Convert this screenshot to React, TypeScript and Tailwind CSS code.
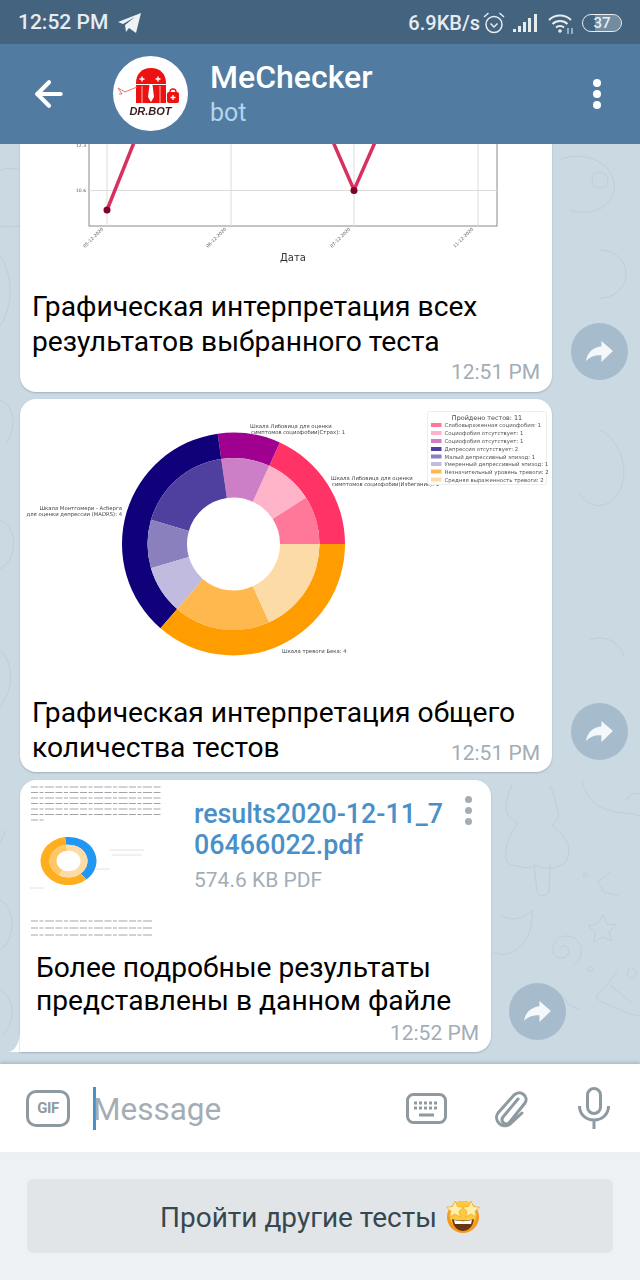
import React from 'react';
import { ArrowLeft } from 'lucide-react';

const FONT = "font-['Roboto','Noto_Sans',sans-serif]";

// matplotlib style wedge, angles in degrees counterclockwise from east
function wedge(cx: number, cy: number, r0: number, r1: number, a0: number, a1: number) {
  const p = (r: number, a: number) => {
    const t = (a * Math.PI) / 180;
    return `${(cx + r * Math.cos(t)).toFixed(2)} ${(cy - r * Math.sin(t)).toFixed(2)}`;
  };
  const large = a1 - a0 > 180 ? 1 : 0;
  return `M${p(r1, a0)} A${r1} ${r1} 0 ${large} 0 ${p(r1, a1)} L${p(r0, a1)} A${r0} ${r0} 0 ${large} 1 ${p(r0, a0)} Z`;
}

const U = 360 / 11;
const outer = [
  { from: 0, to: 2, fill: '#ff3366' },
  { from: 2, to: 3, fill: '#a0008f' },
  { from: 3, to: 7, fill: '#10007a' },
  { from: 7, to: 11, fill: '#ff9c00' },
];
const inner = [
  { from: 0, to: 1, fill: '#ff7799' },
  { from: 1, to: 2, fill: '#ffb3c8' },
  { from: 2, to: 3, fill: '#cc7fc7' },
  { from: 3, to: 5, fill: '#4f3f9e' },
  { from: 5, to: 6, fill: '#8a80bd' },
  { from: 6, to: 7, fill: '#c0bbdf' },
  { from: 7, to: 9, fill: '#ffb84d' },
  { from: 9, to: 11, fill: '#fcdba6' },
];
const legend = [
  { text: 'Слабовыраженная социофобия: 1', fill: '#ff7799', y: 425 },
  { text: 'Социофобия отсутствует: 1', fill: '#ffb3c8', y: 433 },
  { text: 'Социофобия отсутствует: 1', fill: '#cc7fc7', y: 441 },
  { text: 'Депрессия отсутствует: 2', fill: '#4f3f9e', y: 449 },
  { text: 'Малый депрессивный эпизод: 1', fill: '#8a80bd', y: 456.5 },
  { text: 'Умеренный депрессивный эпизод: 1', fill: '#c0bbdf', y: 464 },
  { text: 'Незначительный уровень тревоги: 2', fill: '#ffb84d', y: 471.5 },
  { text: 'Средняя выраженность тревоги: 2', fill: '#fcdba6', y: 479.5 },
];

function Doodles() {
  return (
    <svg className="absolute inset-0 w-full h-full" viewBox="0 144 640 920" fill="none" stroke="#bfced9" strokeWidth="1">
      <path d="M0 170c20-6 40 6 44 26s-14 34-44 30M-4 250c16 20 20 50 4 76" />
      <path d="M560 160c20-10 50 0 54 22s-20 36-44 28M600 250c14 0 26 10 26 24s-12 24-26 24" />
      <circle cx="600" cy="180" r="8" />
      <path d="M0 400c14 4 18 26 6 44M-2 520c20 4 22 40 0 50M0 650c14 12 14 40 0 56" />
      <path d="M600 430c20 10 30 40 20 60s-30 20-40 4M590 640c14-6 30 2 34 16" />
      <path d="M6 830l-6 14M0 900c16 8 16 40 0 50M0 990c14 6 16 30 4 44" />
      {/* tree */}
      <path d="M512 785c-6 14-8 24-4 30 4 6 8 6 10 8-8 10-14 24-12 36 2 8 10 6 16 8 6 2 12-2 18 0 6 2 14 2 22-2 6-4 8-12 6-20-2-8-10-14-16-20 4-2 8-8 6-14-2-8-4-16-8-26M534 864l3 28c2 5 10 5 12 0l1-28" />
      <path d="M582 780c2 14 12 26 26 30 12 4 22 2 32 6M626 800c4-6 10-8 14-6" />
      {/* moon */}
      <path d="M500 914c8 6 20 8 32-4 2 22-10 42-26 44-4 2-8 0-12-2" />
      {/* swirl */}
      <path d="M560 950c0-4 6-6 8-2 3 5-3 12-9 10-8-3-8-15 0-20 9-5 20 0 22 10 2 10-6 17-8 18" />
      <path d="M603 915l4 9 9 1-7 7 3 9-9-4-9 5 1-10-7-6 9-2z" />
      <circle cx="585" cy="875" r="2" />
      <circle cx="590" cy="969" r="2.500" />
      {/* gift */}
      <path d="M618 972l-20 22c-3 4 0 6 4 8l28 12 10 2M630 968c-4 2-4 10 2 10s6-8 0-10M610 985l22 18" />
      <path d="M610 872l-12 10 6 10 14 4M540 990c10-4 22 2 28 14l12 6" />
    </svg>
  );
}

function ShareButton() {
  return (
    <div className="w-[57px] h-[57px] rounded-full bg-[#a6bccc] flex items-center justify-center mb-[12px] shrink-0">
      <svg width="27" height="23" viewBox="0 0 28 24">
        <path d="M16 1l12 10.500L16 23v-7C9 15.500 4 17.500 0 22c1-8 6-14 16-15.500z" fill="#f5f8fa" />
      </svg>
    </div>
  );
}

function Time({ children }: { children: React.ReactNode }) {
  return <span className="text-[21px] leading-[24px] text-[#a3adb5] whitespace-nowrap">{children}</span>;
}

function LineChart() {
  return (
    <svg className="block blur-[0.4px]" width="532" height="295" viewBox="20 -6 532 295">
      <rect x="89" y="-6" width="408" height="232" fill="none" stroke="#8a8a8a" strokeWidth="1" />
      <g stroke="#dcdcdc" strokeWidth="1">
        <path d="M107 -6V226M231 -6V226M354 -6V226M478 -6V226M89 190.500H497M89 100H497" />
      </g>
      <path d="M107 210L195 -10M267 -10L354 190L420 40" fill="none" stroke="#d8315f" strokeWidth="3.500" />
      <circle cx="107" cy="210" r="3.500" fill="#80002e" />
      <circle cx="354" cy="190.500" r="3.500" fill="#80002e" />
      <g fontFamily="'DejaVu Sans',sans-serif" fill="#555" fontSize="4.500">
        <text x="76" y="192">10.6</text>
        <text x="76" y="147">12.3</text>
        <text transform="translate(85 248) rotate(-45)">05-12-2020</text>
        <text transform="translate(208 248) rotate(-45)">06-12-2020</text>
        <text transform="translate(332 248) rotate(-45)">07-12-2020</text>
        <text transform="translate(455 248) rotate(-45)">11-12-2020</text>
      </g>
      <text x="293" y="261" textAnchor="middle" fontFamily="'DejaVu Sans',sans-serif" fontSize="10" fill="#333">Дата</text>
    </svg>
  );
}

function DonutChart() {
  return (
    <svg className="block blur-[0.3px]" width="532" height="296" viewBox="20 399 532 296">
      {outer.map((w, i) => (
        <path key={i} d={wedge(233.5, 544, 86, 111.5, w.from * U, w.to * U)} fill={w.fill} />
      ))}
      {inner.map((w, i) => (
        <path key={i} d={wedge(233.5, 544, 46.5, 86, w.from * U, w.to * U)} fill={w.fill} />
      ))}
      <g fontFamily="'DejaVu Sans',sans-serif" fontSize="5.300" fill="#444">
        <text x="250" y="427.500">Шкала Либовица для оценки</text>
        <text x="251" y="433.500">симптомов социофобии(Страх): 1</text>
        <text x="331" y="480">Шкала Либовица для оценки</text>
        <text x="332" y="486">симптомов социофобии(Избегание): 1</text>
        <text x="122" y="510" textAnchor="end">Шкала Монтгомери - Асберга</text>
        <text x="122" y="516" textAnchor="end">для оценки депрессии (MADRS): 4</text>
        <text x="282" y="653">Шкала тревоги Бека: 4</text>
      </g>
      <rect x="427.500" y="411.500" width="119" height="73" rx="1.500" fill="#fff" stroke="#eeeeee" />
      <text x="487" y="419.500" textAnchor="middle" fontFamily="'DejaVu Sans',sans-serif" fontSize="6.400" fill="#444">Пройдено тестов: 11</text>
      {legend.map((l, i) => (
        <g key={i}>
          <rect x="431" y={l.y - 2} width="10.500" height="4" fill={l.fill} />
          <text x="444.500" y={l.y + 2} fontFamily="'DejaVu Sans',sans-serif" fontSize="5.400" fill="#555">{l.text}</text>
        </g>
      ))}
    </svg>
  );
}

function PdfThumb() {
  const top = [785, 790.500, 796, 801.500, 807, 812.500, 818];
  return (
    <svg className="block shrink-0 blur-[0.5px]" width="146" height="158" viewBox="20 780 146 158">
      <g stroke="#a2a5a9" strokeWidth="1.100" strokeDasharray="7 1.500 4 1.500 9 1.500">
        {top.map((y, i) => (
          <line key={i} x1="31" y1={y + 2} x2={i === 6 ? 45 : 161} y2={y + 2} />
        ))}
        <line x1="31" y1="921" x2="153" y2="921" />
        <line x1="31" y1="928" x2="153" y2="928" />
        <line x1="31" y1="935" x2="153" y2="935" />
      </g>
      <g transform="translate(68.500 861) scale(1 0.86)">
        <path d={wedge(0, 0, 19, 28, -50, 97)} fill="#2196f3" />
        <path d={wedge(0, 0, 19, 28, 97, 310)} fill="#ffae1f" />
        <path d={wedge(0, 0, 12, 19, 0, 97)} fill="#fcdba6" />
        <path d={wedge(0, 0, 12, 19, 97, 240)} fill="#ffc766" />
        <path d={wedge(0, 0, 12, 19, 240, 360)} fill="#fcdba6" />
      </g>
      <g stroke="#e2e2e2" strokeWidth="1">
        <path d="M110 850h34M112 855h30M96 869h14M30 888h14" />
      </g>
    </svg>
  );
}

function StarStruck() {
  return (
    <svg width="34" height="36" viewBox="0 0 34 36">
      <circle cx="17" cy="19" r="16" fill="#f29a1f" />
      <circle cx="17" cy="16.500" r="13.500" fill="#fcc93f" />
      <path d="M9 3l2.500 5.500 6 .800-4.500 4 1.200 5.700-5.200-3-5.200 3L5 13.300.5 9.300l6-.800z" fill="#fff0a8" stroke="#f0a030" strokeWidth=".7" />
      <path d="M25 3l2.500 5.500 6 .800-4.500 4 1.200 5.700-5.200-3-5.200 3 1.200-5.700-4.500-4 6-.800z" fill="#fff0a8" stroke="#f0a030" strokeWidth=".7" />
      <path d="M6 21c6 2 16 2 22 0-1 8-6 12-11 12S7 29 6 21z" fill="#6b3410" />
      <path d="M8 22c5 1.500 13 1.500 18 0l-1 4H9z" fill="#fff" />
    </svg>
  );
}

export default function App() {
  return (
    <div className={`w-[640px] h-[1280px] flex flex-col overflow-hidden ${FONT}`}>
      {/* status bar */}
      <div className="h-[44px] bg-[#44637f] flex items-center pl-[18px] pr-[18px] pt-[2px] text-[#e6ecf0] shrink-0">
        <span className="text-[21px] font-medium">12:52 PM</span>
        <svg className="ml-[10px]" width="23" height="20" viewBox="0 0 23 20">
          <path d="M23 0L18 20 11 15 8 19 7 12 17 4 5 11 0 9z" fill="#eef2f5" />
        </svg>
        <span className="ml-auto text-[20px] font-medium">6.9KB/s</span>
        <svg className="ml-[3px]" width="22" height="24" viewBox="0 0 22 24" fill="none" stroke="#e6ecf0" strokeWidth="1.500">
          <circle cx="11" cy="13.500" r="8" />
          <path d="M7.500 12.500l3.500 3.500 3.500-3.500M1 6l4.500-4M21 6l-4.500-4" />
        </svg>
        <svg className="ml-[8px]" width="25" height="18" viewBox="0 0 25 18" fill="#e6ecf0">
          <rect x="0" y="15" width="3" height="3" />
          <rect x="5" y="12" width="3" height="6" />
          <rect x="10" y="8" width="3" height="10" />
          <rect x="15" y="4" width="3" height="14" />
          <rect x="21" y="0" width="3" height="18" />
        </svg>
        <svg className="ml-[10px]" width="26" height="21" viewBox="0 0 26 21" fill="none" stroke="#e6ecf0" strokeWidth="2">
          <path d="M1 7c6-6 16-6 22 0M4.500 11c4-4 11-4 15 0M8 14.500c2-2 6-2 8 0" />
          <circle cx="12" cy="18" r="1.800" fill="#e6ecf0" stroke="none" />
          <path d="M20 15v6M24 15v6" strokeWidth="1.500" opacity=".7" />
        </svg>
        <div className="ml-[8px] relative w-[40px] h-[18px] rounded-full border-[1.500px] border-[#e6ecf0] flex items-center justify-center overflow-hidden">
          <div className="absolute right-0 top-0 bottom-0 w-[26px] bg-[#e6ecf0]/30" />
          <span className="relative text-[15px] leading-none font-medium">37</span>
        </div>
      </div>

      {/* header */}
      <div className="h-[100px] bg-[#517ba0] flex items-center shrink-0 relative">
        <ArrowLeft className="ml-[29px] text-white shrink-0" size={40} strokeWidth={2.500} />
        <div className="ml-[44px] w-[75px] h-[75px] rounded-full bg-white shrink-0 mt-[-1px]">
          <svg className="blur-[0.3px]" width="75" height="75" viewBox="113 57 75 75">
            <path d="M136 84c0-9 6-15 15-15s15 6 15 15v20h-30z" fill="#ee1111" />
            <path d="M136 85.500h30" stroke="#fff" strokeWidth="1" />
            <path d="M139.500 80h5M142 77.500v5M155.500 80h5M158 77.500v5" stroke="#fff" strokeWidth="1.400" />
            <path d="M149.500 86h3l1.500 12-3 5-3-5z" fill="#fff" />
            <path d="M142 87v17M160 87v17" stroke="#fff" strokeWidth=".7" />
            <path d="M137 88l-12 5-7-4 4 6-3 0" fill="none" stroke="#e87070" strokeWidth="1" />
            <rect x="167" y="93" width="12" height="11" rx="2" fill="#ee1111" />
            <path d="M170 93c0-4 6-4 6 0" fill="none" stroke="#ee1111" strokeWidth="1.300" />
            <path d="M170.500 98.500h5M173 96v5" stroke="#fff" strokeWidth="1.300" />
            <text x="150.500" y="116" textAnchor="middle" fontFamily="'Liberation Sans',sans-serif" fontWeight="700" fontStyle="italic" fontSize="11" fill="#3a2222">DR.BOT</text>
          </svg>
        </div>
        <div className="ml-[22px] flex flex-col">
          <span className="text-[32px] leading-[38px] font-medium text-white">MeChecker</span>
          <span className="text-[25px] leading-[34px] text-[#b5d4ee]">bot</span>
        </div>
        <div className="ml-auto mr-[39px] flex flex-col gap-[3px]">
          <div className="w-[8px] h-[8px] rounded-full bg-white" />
          <div className="w-[8px] h-[8px] rounded-full bg-white" />
          <div className="w-[8px] h-[8px] rounded-full bg-white" />
        </div>
      </div>

      {/* messages */}
      <div className="flex-1 min-h-0 bg-[#cbd9e3] relative overflow-hidden flex flex-col justify-end pb-[12px] pl-[20px] gap-[7px]">
        <Doodles />
        <div className="relative flex items-end gap-[19px] shrink-0">
          <div className="w-[532px] bg-white rounded-[16px] shadow-[0_1px_2px_#9fb0bc] overflow-hidden">
            <LineChart />
            <div className="px-[12px] pb-[8px]">
              <p className="text-[28.2px] leading-[35px] text-black">Графическая интерпретация всех<br />результатов выбранного теста</p>
              <div className="flex justify-end mt-[1px]">
                <Time>12:51 PM</Time>
              </div>
            </div>
          </div>
          <ShareButton />
        </div>
        <div className="relative flex items-end gap-[19px] shrink-0">
          <div className="w-[532px] bg-white rounded-[16px] shadow-[0_1px_2px_#9fb0bc] overflow-hidden">
            <DonutChart />
            <div className="px-[12px] pb-[7px] flex items-end justify-between">
              <p className="text-[28.2px] leading-[35px] text-black">Графическая интерпретация общего<br />количества тестов</p>
            </div>
            <div className="flex justify-end px-[12px] pb-[7px] mt-[-31px]">
              <Time>12:51 PM</Time>
            </div>
          </div>
          <ShareButton />
        </div>
        <div className="relative flex items-end gap-[18px] shrink-0 mt-[1px]">
          <div className="relative w-[471px]">
            <svg className="absolute left-[-12px] bottom-0" width="24" height="24" viewBox="0 0 24 24">
              <path d="M24 0V24H1C8 22 12 14 12 0z" fill="#fff" />
            </svg>
            <div className="relative bg-white rounded-[16px] rounded-bl-none shadow-[0_1px_2px_#9fb0bc] overflow-hidden">
              <div className="flex">
                <PdfThumb />
                <div className="ml-[28px] pt-[19px] relative flex-1">
                  <p className="text-[26.800px] leading-[31px] font-medium text-[#4a90c8] w-[252px] break-all">results2020-12-11_706466022.pdf</p>
                  <p className="mt-[4px] text-[21px] leading-[30px] text-[#a3adb5]">574.6 KB PDF</p>
                  <div className="absolute right-[19px] top-[16px] flex flex-col gap-[4px]">
                    <div className="w-[7px] h-[7px] rounded-full bg-[#a3adb5]" />
                    <div className="w-[7px] h-[7px] rounded-full bg-[#a3adb5]" />
                    <div className="w-[7px] h-[7px] rounded-full bg-[#a3adb5]" />
                  </div>
                </div>
              </div>
              <div className="px-[16px] pt-[13px]">
                <p className="text-[28.2px] leading-[33px] text-black">Более подробные результаты<br />представлены в данном файле</p>
              </div>
              <div className="flex justify-end pr-[12px] pb-[7px] pt-[4px]">
                <Time>12:52 PM</Time>
              </div>
            </div>
          </div>
          <ShareButton />
        </div>
      </div>

      {/* input bar */}
      <div className="h-[88px] bg-white flex items-center shrink-0 shadow-[0_-2px_3px_rgba(90,110,125,0.25)] relative">
        <div className="ml-[26px] w-[44px] h-[37px] rounded-[10px] border-[3px] border-[#8e9a9f] flex items-center justify-center text-[15px] font-bold text-[#8e9a9f] tracking-tight">GIF</div>
        <div className="ml-[23px] w-[3px] h-[43px] bg-[#4a90c8]" />
        <span className="text-[31.500px] text-[#a4adb3] leading-none ml-[-3px] mt-[3px]">Message</span>
        <svg className="ml-auto" width="41" height="31" viewBox="0 0 41 31" fill="none">
          <rect x="1.500" y="1.500" width="38" height="28" rx="6" stroke="#8e9a9f" strokeWidth="3" />
          <path d="M8 10h25M8 15h25" stroke="#8e9a9f" strokeWidth="3" strokeDasharray="3 2" />
          <path d="M13 22h15" stroke="#8e9a9f" strokeWidth="3" />
        </svg>
        <svg className="ml-[47px]" width="36" height="40" viewBox="0 0 36 40" fill="none">
          <path d="M24 11L9 29c-3 4 2 9 6 6L31 15c4-6-4-14-11-8L4 25c-5 7 4 17 12 11l12-11" stroke="#8e9a9f" strokeWidth="3" strokeLinecap="round" />
        </svg>
        <svg className="ml-[48px] mr-[30px]" width="32" height="42" viewBox="0 0 32 42" fill="none" stroke="#8e9a9f" strokeWidth="3">
          <rect x="9.500" y="1.500" width="13" height="25" rx="6.500" />
          <path d="M1.500 19c0 8 6 14 14.500 14s14.500-6 14.500-14M16 33v9" />
        </svg>
      </div>

      {/* bot keyboard */}
      <div className="flex-1 bg-[#eef1f4] px-[27px] pt-[27px] pb-[27px] shrink-0 h-[128px] max-h-[128px]">
        <div className="h-[74px] rounded-[6px] bg-[#e1e5e8] flex items-center justify-center gap-[9px]">
          <span className="text-[28px] text-[#37474f] mt-[3px]">Пройти другие тесты</span>
          <StarStruck />
        </div>
      </div>
    </div>
  );
}
